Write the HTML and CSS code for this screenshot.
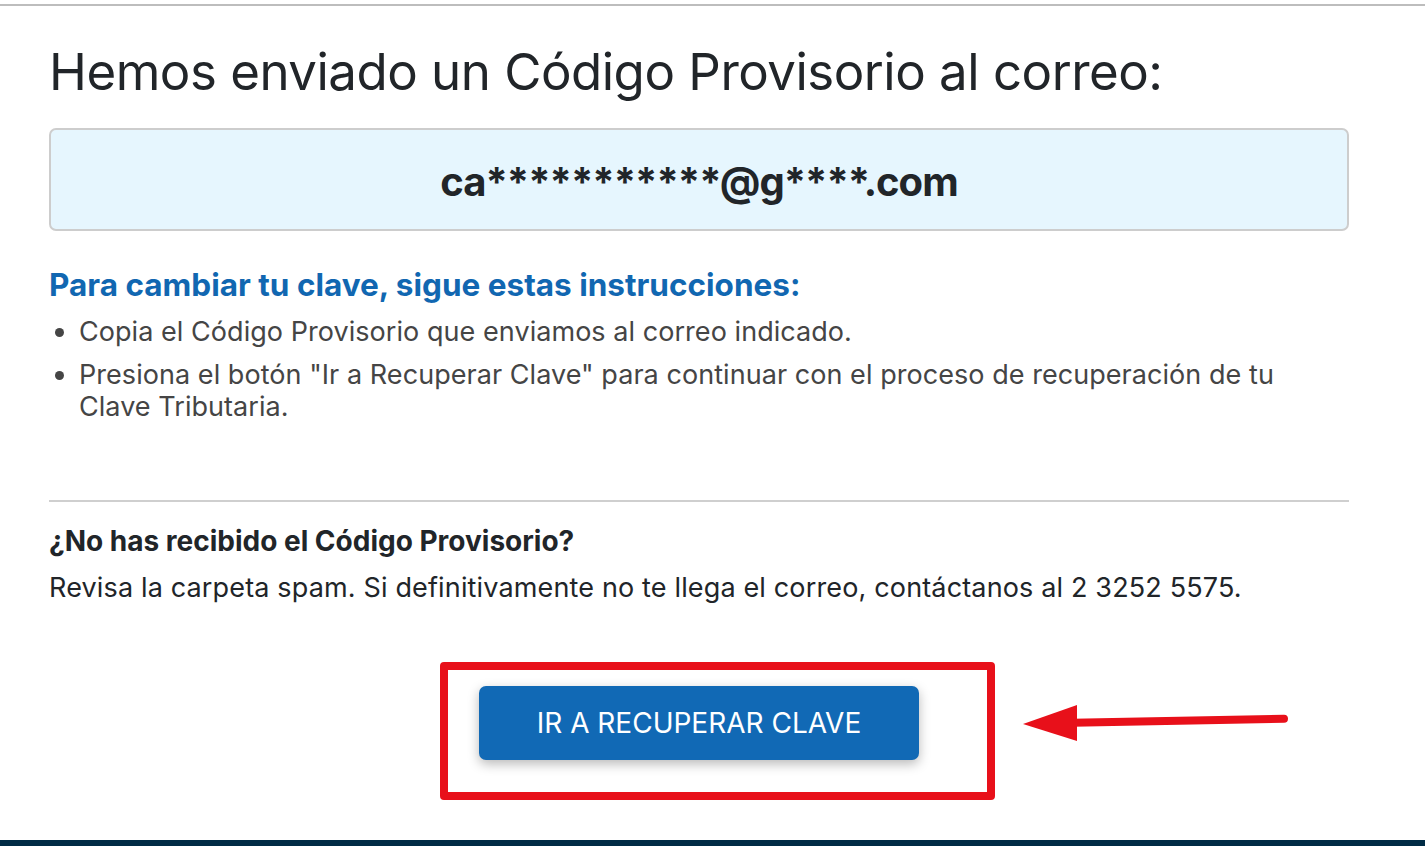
FILE: index.html
```html
<!DOCTYPE html>
<html lang="es">
<head>
<meta charset="utf-8">
<title>Recuperar Clave</title>
<link rel="stylesheet" href="styles.css">
</head>
<body>
<div class="topline"></div>
<main class="content">
  <h1 class="title">Hemos enviado un Código Provisorio al correo:</h1>
  <div class="email-box"><span class="email">ca***********@g****.com</span></div>
  <h2 class="instr-title">Para cambiar tu clave, sigue estas instrucciones:</h2>
  <ul class="steps">
    <li>Copia el Código Provisorio que enviamos al correo indicado.</li>
    <li>Presiona el botón "Ir a Recuperar Clave" para continuar con el proceso de recuperación de tu Clave Tributaria.</li>
  </ul>
  <hr class="divider">
  <h3 class="help-title">¿No has recibido el Código Provisorio?</h3>
  <p class="help-text">Revisa la carpeta spam. Si definitivamente no te llega el correo, contáctanos al 2 3252 5575.</p>
  <div class="action-row">
    <div class="btn-wrap">
      <button class="btn">IR A RECUPERAR CLAVE</button>
      <div class="highlight"></div>
    </div>
    <svg class="arrow" width="280" height="50" viewBox="0 0 280 50">
      <line x1="50" y1="25.7" x2="261" y2="21.7" stroke="#e8101a" stroke-width="8" stroke-linecap="round"/>
      <polygon points="0,27 54,8 54,44" fill="#e8101a"/>
    </svg>
  </div>
</main>
<footer class="bottombar"></footer>
</body>
</html>
```

FILE: styles.css
```css
* { box-sizing: border-box; }
html, body { margin: 0; padding: 0; }
body {
  background: #ffffff;
  font-family: Inter, "Noto Sans", "Liberation Sans", sans-serif;
  color: #212529;
  width: 1425px;
  height: 846px;
  overflow: hidden;
  display: flex;
  flex-direction: column;
}
.topline {
  margin-top: 4px;
  height: 2px;
  background: #bdbdbd;
  flex: none;
}
.content {
  flex: 1;
  width: 1300px;
  margin-left: 49px;
  position: relative;
}
.title {
  margin: 34px 0 0;
  font-size: 51px;
  line-height: 64px;
  letter-spacing: -0.5px;
  font-weight: 400;
  color: #212529;
}
.email-box {
  margin-top: 24px;
  height: 103px;
  border: 2px solid #cdcdcd;
  border-radius: 7px;
  background: #e6f6fe;
  display: flex;
  align-items: center;
  justify-content: center;
  padding-top: 5px;
}
.email {
  font-size: 40px;
  font-weight: 700;
  letter-spacing: -1px;
  line-height: 50px;
  color: #212529;
}
.instr-title {
  margin: 35.5px 0 0;
  font-size: 31.5px;
  line-height: 36px;
  font-weight: 700;
  color: #1167b1;
}
.steps {
  margin: 13px 0 0;
  padding: 0 40px 0 30px;
  font-size: 27px;
  line-height: 32px;
  letter-spacing: 0.05px;
  color: #454545;
}
.steps li + li { margin-top: 11px; }
.divider {
  margin: 77px 0 0;
  border: 0;
  height: 2px;
  background: #cfcfcf;
}
.help-title {
  margin: 23px 0 0;
  font-size: 28px;
  line-height: 32px;
  font-weight: 700;
  color: #212529;
}
.help-text {
  margin: 15px 0 0;
  font-size: 27px;
  line-height: 32px;
  letter-spacing: 0.15px;
  color: #212529;
}
.action-row {
  margin-top: 82px;
  display: flex;
  justify-content: center;
  position: relative;
}
.btn-wrap { position: relative; }
.btn {
  display: block;
  width: 440px;
  height: 74px;
  border: 0;
  border-radius: 7px;
  background: #1169b5;
  color: #ffffff;
  font-family: Inter, "Noto Sans", "Liberation Sans", sans-serif;
  font-size: 28px;
  font-weight: 400;
  box-shadow: 0 4px 12px rgba(0, 0, 0, 0.28);
}
.highlight {
  position: absolute;
  left: -39px;
  top: -24px;
  width: 555px;
  height: 138px;
  border: 8px solid #e8101a;
  border-radius: 4px;
  pointer-events: none;
}
.arrow {
  position: absolute;
  left: 974px;
  top: 11px;
}
.bottombar {
  flex: none;
  height: 6px;
  background: #002b45;
}
```
